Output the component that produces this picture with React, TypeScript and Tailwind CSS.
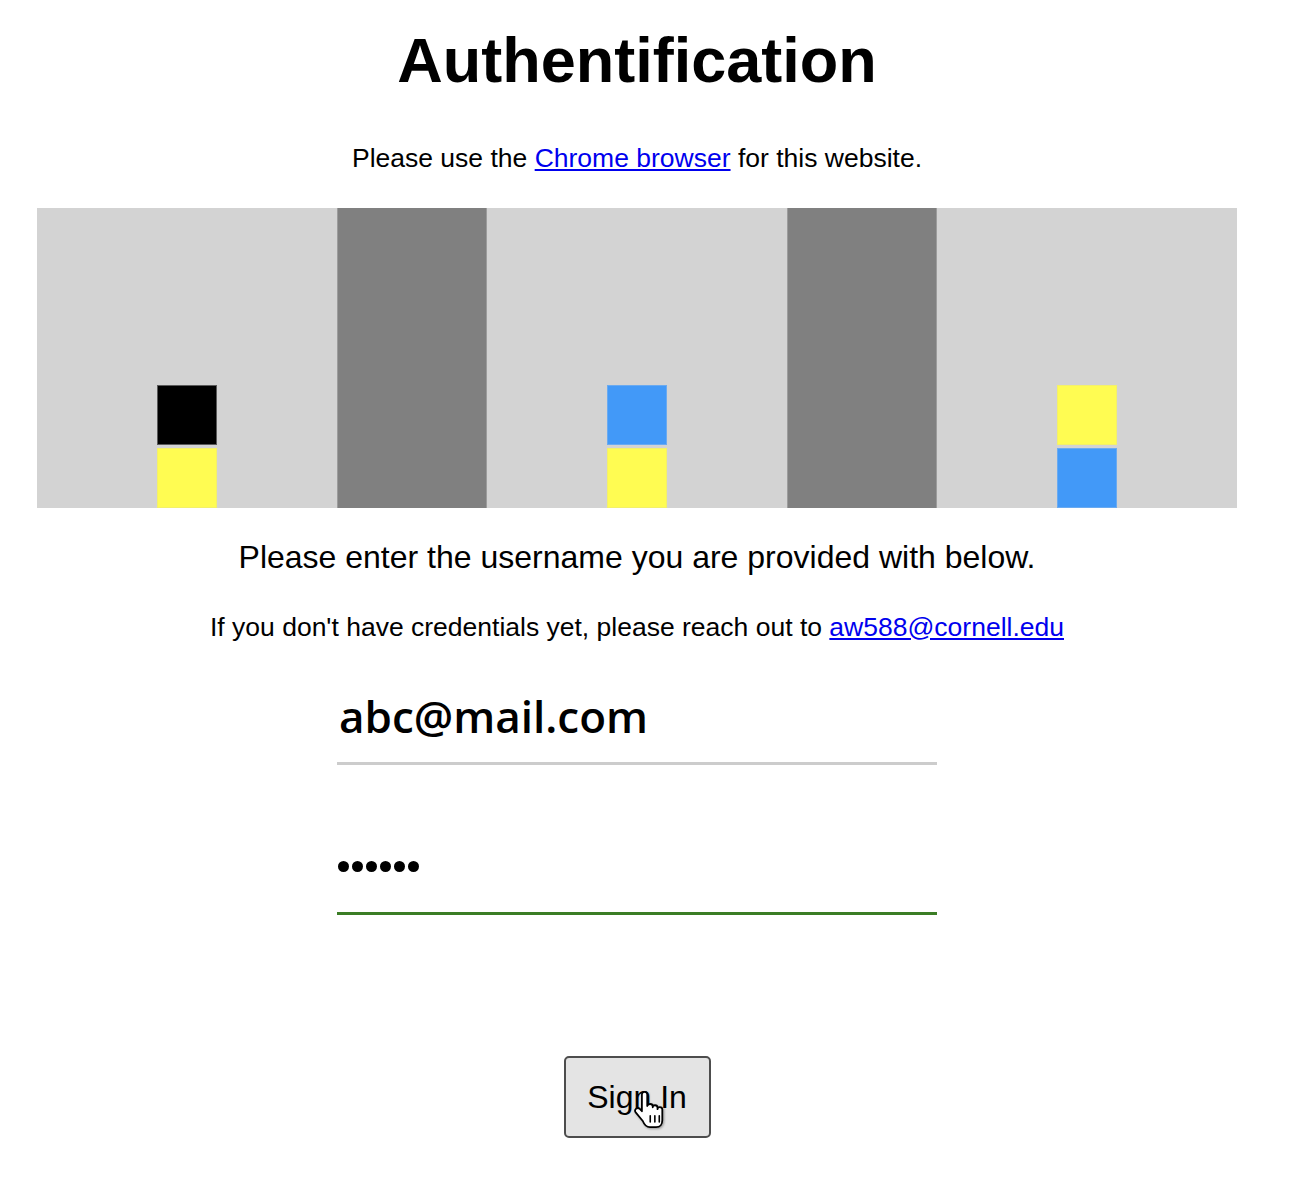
import { useState } from 'react';

type Block = { color: string; border: string };

interface Column {
  top: Block;
  bottom: Block;
}

const black: Block = { color: 'bg-black', border: 'border-[#5a5a5a]' };
const yellow: Block = { color: 'bg-[#fffc52]', border: 'border-[#f3f06a]' };
const blue: Block = { color: 'bg-[#4299f8]', border: 'border-[#6aaaf0]' };

const columns: Column[] = [
  { top: black, bottom: yellow },
  { top: blue, bottom: yellow },
  { top: yellow, bottom: blue },
];

function Square({ block }: { block: Block }) {
  return <div className={`w-[60px] h-[60px] border ${block.color} ${block.border}`} />;
}

function Lane({ column }: { column: Column }) {
  return (
    <div className="w-[300px] h-full bg-[#d3d3d3] flex flex-col items-center justify-end gap-[3px]">
      <Square block={column.top} />
      <Square block={column.bottom} />
    </div>
  );
}

function Wall() {
  return <div className="w-[150px] h-full bg-[#808080] border-x border-[#9c9c9c]" />;
}

// pointer cursor sitting over the button
function HandCursor() {
  return (
    <svg
      width="32"
      height="39"
      viewBox="0 0 18 22"
      className="absolute left-[67px] top-[32px] pointer-events-none drop-shadow-[1px_1px_1px_rgba(0,0,0,0.35)]"
    >
      <path
        d="M6.5 1C5.7 1 5 1.7 5 2.5V12L3.8 10.7C3.2 10.1 2.2 10.1 1.6 10.7C1 11.3 1.1 12.2 1.6 12.8L5.5 17.5C6.3 19.5 7.5 21 9.5 21H13C15.3 21 16.5 19.2 16.5 17V11C16.5 10.2 15.9 9.6 15.1 9.6C14.4 9.6 13.8 10.1 13.8 10.8V10C13.8 9.2 13.2 8.6 12.4 8.6C11.7 8.6 11.1 9.1 11.1 9.8V9.3C11.1 8.5 10.5 7.9 9.7 7.9C8.9 7.9 8.3 8.4 8 9V2.5C8 1.7 7.3 1 6.5 1Z"
        fill="#fff"
        stroke="#000"
        strokeWidth="1"
        strokeLinejoin="round"
      />
      <path d="M9.7 14.5V18M12.3 14.5V18M14.8 14.5V18" stroke="#000" strokeWidth="0.9" strokeLinecap="round" />
    </svg>
  );
}

export default function App() {
  const [username, setUsername] = useState('abc@mail.com');

  return (
    <div className="w-[1274px] min-h-[1192px] bg-white text-black font-['Liberation_Sans',Arial,sans-serif] flex flex-col items-center">
      <h1 className="mt-[29px] text-[63px] leading-none font-bold">Authentification</h1>

      <p className="mt-[53px] text-[26.5px] leading-none">
        Please use the{' '}
        <a href="#" className="text-[#0000ee] underline">
          Chrome browser
        </a>{' '}
        for this website.
      </p>

      <div className="mt-[36px] w-[1200px] h-[300px] flex">
        <Lane column={columns[0]} />
        <Wall />
        <Lane column={columns[1]} />
        <Wall />
        <Lane column={columns[2]} />
      </div>

      <p className="mt-[33px] text-[32px] leading-none">Please enter the username you are provided with below.</p>

      <p className="mt-[41px] text-[26.5px] leading-none">
        If you don't have credentials yet, please reach out to{' '}
        <a href="mailto:aw588@cornell.edu" className="text-[#0000ee] underline">
          aw588@cornell.edu
        </a>
      </p>

      <div className="mt-[22px] w-[600px] flex flex-col">
        <input
          value={username}
          onChange={(e) => setUsername(e.target.value)}
          className="w-full h-[103px] pt-[7px] pb-0 pl-[2px] pr-0 outline-none border-0 border-b-[3px] border-[#cccccc] bg-transparent font-['Open_Sans',sans-serif] font-semibold text-[44px] text-black"
        />
        <div className="w-full h-[150px] flex items-end gap-[3px] pl-[1px] pb-[40px] border-b-[3px] border-[#3b7d25]">
          {[0, 1, 2, 3, 4, 5].map((i) => (
            <span key={i} className="w-[11px] h-[11px] rounded-full bg-black" />
          ))}
        </div>
      </div>

      <button className="relative mt-[141px] w-[147px] h-[82px] rounded-[5px] border-2 border-[#4d4d4d] bg-[#e4e4e4] text-[32px] leading-none text-black flex items-center justify-center">
        Sign In
        <HandCursor />
      </button>
    </div>
  );
}
